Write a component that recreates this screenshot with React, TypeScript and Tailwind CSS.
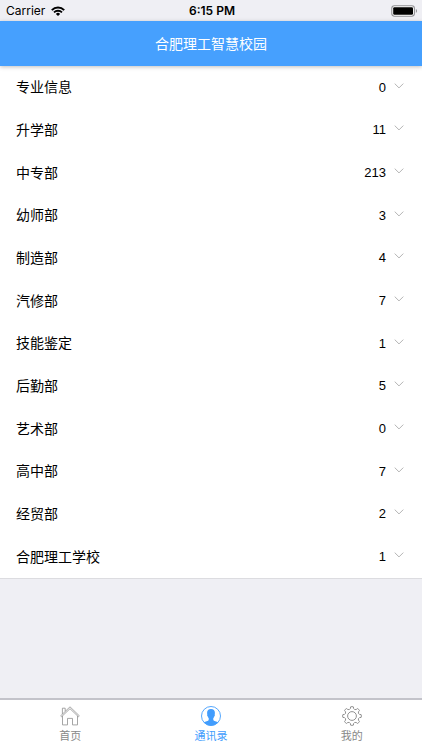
import React, { useState } from "react";

const departments = [
  { name: "专业信息", count: 0 },
  { name: "升学部", count: 11 },
  { name: "中专部", count: 213 },
  { name: "幼师部", count: 3 },
  { name: "制造部", count: 4 },
  { name: "汽修部", count: 7 },
  { name: "技能鉴定", count: 1 },
  { name: "后勤部", count: 5 },
  { name: "艺术部", count: 0 },
  { name: "高中部", count: 7 },
  { name: "经贸部", count: 2 },
  { name: "合肥理工学校", count: 1 },
];

function WifiIcon() {
  return (
    <svg viewBox="0 0 14 10" className="h-[10px] w-[14px]" fill="none" stroke="#000" strokeWidth="2" aria-hidden="true">
      <path d="M0.8 4.1a8.8 8.8 0 0 1 12.4 0" />
      <path d="M3 6.4a5.7 5.7 0 0 1 8 0" strokeWidth="1.8" />
      <path d="M7 10 4.9 7.9a3 3 0 0 1 4.2 0z" fill="#000" stroke="none" />
    </svg>
  );
}

function BatteryIcon() {
  return (
    <svg viewBox="0 0 27 12" className="h-[12px] w-[27px]" aria-hidden="true">
      <rect x="0.8" y="0.8" width="22.6" height="10.4" rx="2.6" fill="#fff" stroke="#8f8f93" strokeWidth="1.1" />
      <rect x="2.2" y="2.2" width="19.8" height="7.6" rx="1.2" fill="#000" />
      <path d="M24.9 4.1c1.5.6 1.5 3.2 0 3.8z" fill="#8f8f93" />
    </svg>
  );
}

function ChevronIcon() {
  return (
    <svg viewBox="0 0 10 6" className="h-[6px] w-[10px]" fill="none" stroke="#b4b4b4" strokeWidth="1" aria-hidden="true">
      <path d="M0.7 0.6 5 4.9 9.3 0.6" />
    </svg>
  );
}

function HomeIcon() {
  return (
    <svg viewBox="0 0 20 20" className="size-5" fill="none" stroke="#8f8f8f" strokeWidth="0.8" strokeLinejoin="round" aria-hidden="true">
      <path d="M0.7 9.8 10 0.8l9.3 9-.9.9L10 2.7l-8.4 8z" />
      <path d="M2.4 8V2.2h2.8v3" />
      <path d="M2.5 10v8.9h5v-6.5h5v6.5h5V10" />
    </svg>
  );
}

function ContactIcon() {
  return (
    <svg viewBox="0 0 20 20" className="size-5" aria-hidden="true">
      <circle cx="10" cy="10" r="9.5" fill="#fff" stroke="#429dfd" strokeWidth="0.9" />
      <path
        d="M10 2.9c-2.700 0-4 1.600-3.900 4 0 .6.1 1 .2 1.500-.4.4 0 1.800.5 2 .2.800.4 1.300.9 1.700v1.900c-.3 1.100-3.400 1.300-4.900 2.300a9.400 9.400 0 0 0 14.400 0c-1.500-1-4.600-1.200-4.900-2.300v-1.900c.5-.4.7-.9.9-1.700.5-.2.9-1.600.5-2 .1-.5.2-.9.2-1.500.1-2.400-1.200-4-3.900-4z"
        fill="#429dfd"
      />
    </svg>
  );
}

const TEETH = 8;

function gearOutline() {
  const at = (radius: number, degrees: number) => {
    const angle = (degrees * Math.PI) / 180;
    return `${(10 + radius * Math.sin(angle)).toFixed(2)} ${(10 - radius * Math.cos(angle)).toFixed(2)}`;
  };
  let path = `M${at(9.2, -9)}`;
  for (let i = 0; i < TEETH; i++) {
    const a = (i * 360) / TEETH;
    path += `Q${at(9.7, a)} ${at(9.2, a + 9)}L${at(7.7, a + 12)}Q${at(6.4, a + 22.5)} ${at(7.7, a + 33)}L${at(9.2, a + 36)}`;
  }
  return `${path}Z`;
}

const gearPath = gearOutline();

function GearIcon() {
  return (
    <svg viewBox="0 0 20 20" className="size-5" fill="none" stroke="#858585" strokeWidth="0.9" strokeLinejoin="round" aria-hidden="true">
      <path d={gearPath} />
      <circle cx="10" cy="10" r="4.4" />
    </svg>
  );
}

const tabs = [
  { label: "首页", Icon: HomeIcon },
  { label: "通讯录", Icon: ContactIcon },
  { label: "我的", Icon: GearIcon },
];

export default function App() {
  const [active, setActive] = useState("通讯录");

  return (
    <div className="flex min-h-screen flex-col bg-[#efeff4] font-['Liberation_Sans','Noto_Sans_CJK_SC',sans-serif] text-black">
      <div className="grid h-[21px] grid-cols-3 items-center pr-1 pl-[6px] font-['Inter',sans-serif] text-xs">
        <div className="flex items-center gap-[6px]">
          <span>Carrier</span>
          <WifiIcon />
        </div>
        <span className="text-center font-semibold">6:15 PM</span>
        <div className="flex justify-end">
          <BatteryIcon />
        </div>
      </div>

      <header className="z-10 flex h-[45px] items-center justify-center bg-[#46a0fe] shadow-[0_1px_4px_rgba(0,0,0,0.25)]">
        <h1 className="text-sm text-white">合肥理工智慧校园</h1>
      </header>

      <main className="flex-1">
        <ul className="grid h-[513px] grid-rows-12 border-b border-[#dcdce0] bg-white">
          {departments.map(({ name, count }) => (
            <li key={name}>
              <button type="button" className="flex h-full w-full items-center pr-[18px] pl-4 text-left">
                <span className="flex-1 text-sm">{name}</span>
                <span className="mr-2 text-[13px]">{count}</span>
                <span className="pb-[3px]">
                  <ChevronIcon />
                </span>
              </button>
            </li>
          ))}
        </ul>
      </main>

      <nav className="grid h-[52px] grid-cols-3 border-t-2 border-[#c3c3ca] bg-white">
        {tabs.map(({ label, Icon }) => (
          <button
            key={label}
            type="button"
            onClick={() => setActive(label)}
            className={`flex flex-col items-center pt-[6px] text-[11px] leading-[21px] ${active === label ? "text-[#429dfd]" : "text-[#888888]"}`}
          >
            <Icon />
            <span>{label}</span>
          </button>
        ))}
      </nav>
    </div>
  );
}
